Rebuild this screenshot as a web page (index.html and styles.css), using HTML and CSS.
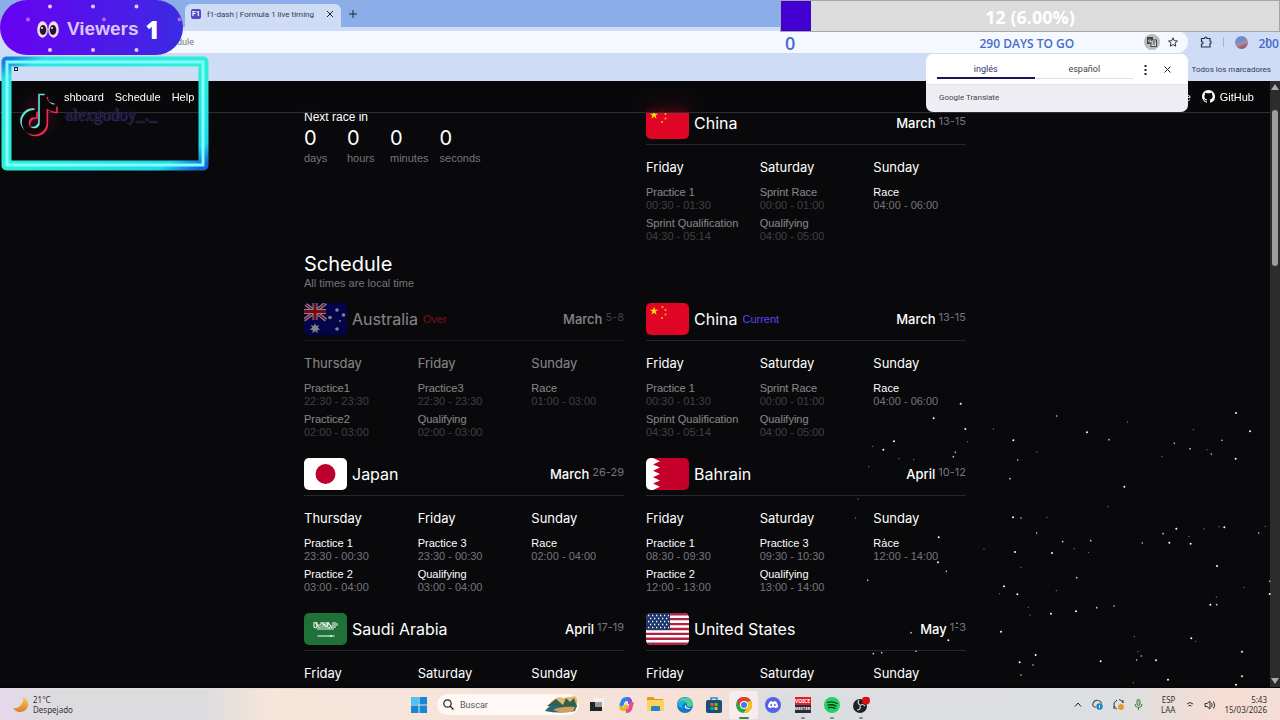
FILE: index.html
```html
<!DOCTYPE html>
<html lang="en">
<head>
    <meta charset="UTF-8">
    <meta name="viewport" content="width=device-width, initial-scale=1.0">
    <title>f1-dash | Formula 1 live timing</title>
    <link rel="stylesheet" href="styles.css">
</head>
<body>
    <!-- Shared flag -->
    <svg class="defs" aria-hidden="true">
        <symbol id="flag-china" viewBox="0 0 43 32">
            <rect width="43" height="32" fill="#e00425"/>
            <path fill="#ffde00" d="M8 3.600l1 3.100h3.200l-2.600 1.900 1 3.100-2.600-1.900-2.600 1.900 1-3.100-2.600-1.900H7z"/>
            <g fill="#ffb400"><circle cx="16.500" cy="4" r="1"/><circle cx="19.500" cy="7" r="1"/><circle cx="19.500" cy="11.500" r="1"/><circle cx="16" cy="15" r="1"/></g>
        </symbol>
    </svg>

    <!-- Browser -->
    <header class="browser">
        <div class="tab-strip">
            <div class="tab">
                <span class="favicon">F1</span>
                <span class="tab-title">f1-dash | Formula 1 live timing</span>
                <button class="icon-btn" aria-label="Close tab"><svg width="8" height="8" viewBox="0 0 8 8"><path d="M1 1l6 6M7 1l-6 6" stroke="#222"/></svg></button>
            </div>
            <button class="icon-btn new-tab" aria-label="New tab"><svg width="8" height="8" viewBox="0 0 8 8"><path d="M4 0v8M0 4h8" stroke="#1c2740"/></svg></button>
        </div>
        <div class="toolbar">
            <div class="omnibox">
                <input type="text" value="dule" aria-label="Address">
                <button class="icon-btn translate-btn" aria-label="Translate">
                    <svg width="10" height="10" viewBox="0 0 10 10"><rect x="0" y="0" width="6" height="7" fill="#444"/><rect x="4" y="3" width="5.500" height="6.500" fill="#ddd" stroke="#444"/><path d="M5.500 5h3M7 4v1c0 2-1 2-1.500 3M6 6l2 2" stroke="#444" stroke-width=".7" fill="none"/><path d="M4 3H1.800v2H4V4H3" stroke="#ddd" stroke-width=".8" fill="none"/></svg>
                </button>
                <button class="icon-btn" aria-label="Bookmark"><svg width="10" height="10" viewBox="0 0 20 20"><path d="M10 1.500l2.500 6 6.500.5-5 4.200 1.600 6.300L10 15.100l-5.600 3.400L6 12.200 1 8l6.500-.5z" fill="none" stroke="#333" stroke-width="2"/></svg></button>
            </div>
            <button class="icon-btn" aria-label="Extensions"><svg width="12" height="12" viewBox="0 0 12 12"><path d="M1.500 2.500h3c0-2 2.500-2 2.500 0h3V5c1.500 0 1.500 2.500 0 2.500V11h-8.500V8c2 0 2-2.500 0-2.500z" fill="none" stroke="#26334d" stroke-width="1.200"/></svg></button>
            <span class="separator"></span>
            <button class="icon-btn avatar" aria-label="Profile"></button>
            <button class="icon-btn menu" aria-label="Menu"><svg width="2" height="8" viewBox="0 0 2 8"><path d="M0 0h1.500v1.500H0zM0 3h1.500v1.500H0zM0 6h1.500v1.500H0z" fill="#26334d"/></svg></button>
        </div>
        <div class="bookmarks">
            <a href="#">Todos los marcadores</a>
        </div>
    </header>

    <!-- Site -->
    <div class="viewport">
        <nav class="navbar">
            <div class="nav-links">
                <a href="#">shboard</a>
                <a href="#">Schedule</a>
                <a href="#">Help</a>
            </div>
            <div class="nav-links nav-right">
                <a href="#">e</a>
                <a href="#" class="github">
                    <svg width="13" height="13" viewBox="0 0 16 16"><path fill="#fff" d="M8 0C3.580 0 0 3.580 0 8c0 3.540 2.290 6.530 5.470 7.590.4.070.55-.17.55-.38 0-.19-.01-.82-.01-1.490-2.010.37-2.530-.49-2.690-.94-.09-.23-.48-.94-.82-1.130-.28-.15-.68-.52-.01-.53.63-.01 1.080.58 1.230.82.72 1.210 1.870.87 2.330.66.07-.52.28-.87.51-1.070-1.780-.2-3.640-.89-3.640-3.950 0-.87.31-1.590.82-2.150-.08-.2-.36-1.020.08-2.120 0 0 .67-.21 2.200.82.64-.18 1.320-.27 2-.27s1.360.09 2 .27c1.530-1.040 2.200-.82 2.200-.82.44 1.100.16 1.920.08 2.120.51.56.82 1.270.82 2.150 0 3.070-1.870 3.750-3.650 3.950.29.25.54.73.54 1.480 0 1.070-.01 1.930-.01 2.200 0 .21.15.46.55.38A8.013 8.013 0 0016 8c0-4.420-3.580-8-8-8z"/></svg>
                    GitHub
                </a>
            </div>
        </nav>

        <main class="content">
            <div class="race-grid">
                <section class="countdown">
                    <p>Next race in</p>
                    <div class="counters">
                        <div class="counter"><strong>0</strong><span>days</span></div>
                        <div class="counter"><strong>0</strong><span>hours</span></div>
                        <div class="counter"><strong>0</strong><span>minutes</span></div>
                        <div class="counter"><strong>0</strong><span>seconds</span></div>
                    </div>
                </section>

                <article class="race">
                    <header class="race-header">
                        <svg class="flag"><use href="#flag-china"/></svg>
                        <h2>China</h2>
                        <p class="date">March <span>13-15</span></p>
                    </header>
                    <div class="days">
                        <div class="day">
                            <h3>Friday</h3>
                            <div class="session past"><p>Practice 1</p><p class="time">00:30 - 01:30</p></div>
                            <div class="session past"><p>Sprint Qualification</p><p class="time">04:30 - 05:14</p></div>
                        </div>
                        <div class="day">
                            <h3>Saturday</h3>
                            <div class="session past"><p>Sprint Race</p><p class="time">00:00 - 01:00</p></div>
                            <div class="session past"><p>Qualifying</p><p class="time">04:00 - 05:00</p></div>
                        </div>
                        <div class="day">
                            <h3>Sunday</h3>
                            <div class="session"><p>Race</p><p class="time">04:00 - 06:00</p></div>
                        </div>
                    </div>
                </article>
            </div>

            <div class="section-title">
                <h1>Schedule</h1>
                <p>All times are local time</p>
            </div>

            <div class="race-grid">
                <!-- Australia -->
                <article class="race over">
                    <header class="race-header">
                        <svg class="flag" viewBox="0 0 43 32">
                            <rect width="43" height="32" fill="#00008b"/>
                            <path d="M0 0l22 17M22 0L0 17" stroke="#fff" stroke-width="3.500"/>
                            <path d="M0 0l22 17M22 0L0 17" stroke="#f00020" stroke-width="1.200"/>
                            <path d="M11 0v17M0 8.500h22" stroke="#fff" stroke-width="5"/>
                            <path d="M11 0v17M0 8.500h22" stroke="#f00020" stroke-width="3"/>
                            <path fill="#fff" d="M11 20l1.200 3 3-1-1.500 2.800 2.800 1.600-3.200.5.200 3.300L11 27.900l-2.500 2.300.2-3.300-3.200-.5 2.800-1.600L6.800 22l3 1z"/>
                            <g fill="#fff"><circle cx="33" cy="7" r="1.800"/><circle cx="26" cy="14.500" r="1.800"/><circle cx="39.500" cy="12" r="1.800"/><circle cx="33" cy="26" r="1.800"/><circle cx="36" cy="18" r="1"/></g>
                        </svg>
                        <h2>Australia</h2>
                        <span class="status">Over</span>
                        <p class="date">March <span>5-8</span></p>
                    </header>
                    <div class="days">
                        <div class="day">
                            <h3>Thursday</h3>
                            <div class="session"><p>Practice1</p><p class="time">22:30 - 23:30</p></div>
                            <div class="session"><p>Practice2</p><p class="time">02:00 - 03:00</p></div>
                        </div>
                        <div class="day">
                            <h3>Friday</h3>
                            <div class="session"><p>Practice3</p><p class="time">22:30 - 23:30</p></div>
                            <div class="session"><p>Qualifying</p><p class="time">02:00 - 03:00</p></div>
                        </div>
                        <div class="day">
                            <h3>Sunday</h3>
                            <div class="session"><p>Race</p><p class="time">01:00 - 03:00</p></div>
                        </div>
                    </div>
                </article>

                <!-- China -->
                <article class="race">
                    <header class="race-header">
                        <svg class="flag"><use href="#flag-china"/></svg>
                        <h2>China</h2>
                        <span class="status current">Current</span>
                        <p class="date">March <span>13-15</span></p>
                    </header>
                    <div class="days">
                        <div class="day">
                            <h3>Friday</h3>
                            <div class="session past"><p>Practice 1</p><p class="time">00:30 - 01:30</p></div>
                            <div class="session past"><p>Sprint Qualification</p><p class="time">04:30 - 05:14</p></div>
                        </div>
                        <div class="day">
                            <h3>Saturday</h3>
                            <div class="session past"><p>Sprint Race</p><p class="time">00:00 - 01:00</p></div>
                            <div class="session past"><p>Qualifying</p><p class="time">04:00 - 05:00</p></div>
                        </div>
                        <div class="day">
                            <h3>Sunday</h3>
                            <div class="session"><p>Race</p><p class="time">04:00 - 06:00</p></div>
                        </div>
                    </div>
                </article>

                <!-- Japan -->
                <article class="race">
                    <header class="race-header">
                        <svg class="flag" viewBox="0 0 43 32"><rect width="43" height="32" fill="#fff"/><circle cx="21.500" cy="16" r="10" fill="#bc002d"/></svg>
                        <h2>Japan</h2>
                        <p class="date">March <span>26-29</span></p>
                    </header>
                    <div class="days">
                        <div class="day">
                            <h3>Thursday</h3>
                            <div class="session"><p>Practice 1</p><p class="time">23:30 - 00:30</p></div>
                            <div class="session"><p>Practice 2</p><p class="time">03:00 - 04:00</p></div>
                        </div>
                        <div class="day">
                            <h3>Friday</h3>
                            <div class="session"><p>Practice 3</p><p class="time">23:30 - 00:30</p></div>
                            <div class="session"><p>Qualifying</p><p class="time">03:00 - 04:00</p></div>
                        </div>
                        <div class="day">
                            <h3>Sunday</h3>
                            <div class="session"><p>Race</p><p class="time">02:00 - 04:00</p></div>
                        </div>
                    </div>
                </article>

                <!-- Bahrain -->
                <article class="race">
                    <header class="race-header">
                        <svg class="flag" viewBox="0 0 43 32"><rect width="43" height="32" fill="#c4002b"/><path fill="#fff" d="M0 0h7l7 3.200-7 3.200 7 3.200-7 3.200L14 16l-7 3.200 7 3.200-7 3.200 7 3.200L7 32H0z"/></svg>
                        <h2>Bahrain</h2>
                        <p class="date">April <span>10-12</span></p>
                    </header>
                    <div class="days">
                        <div class="day">
                            <h3>Friday</h3>
                            <div class="session"><p>Practice 1</p><p class="time">08:30 - 09:30</p></div>
                            <div class="session"><p>Practice 2</p><p class="time">12:00 - 13:00</p></div>
                        </div>
                        <div class="day">
                            <h3>Saturday</h3>
                            <div class="session"><p>Practice 3</p><p class="time">09:30 - 10:30</p></div>
                            <div class="session"><p>Qualifying</p><p class="time">13:00 - 14:00</p></div>
                        </div>
                        <div class="day">
                            <h3>Sunday</h3>
                            <div class="session"><p>Race</p><p class="time">12:00 - 14:00</p></div>
                        </div>
                    </div>
                </article>

                <!-- Saudi Arabia -->
                <article class="race">
                    <header class="race-header">
                        <svg class="flag" viewBox="0 0 43 32">
                            <rect width="43" height="32" fill="#20703a"/>
                            <path d="M10 9v5q2 2 3-1V9m2 5h4V9m-2 0v3m4-3v6m-9-3h5m6-3v5q3 2 4-2m-3-3v4m5-4v6m2-6v6m2-5v3m-22-4l4 6m3-5l5 4m1-5l4 6m-15 1h17" stroke="#e6f2e8" stroke-width="1.100" fill="none"/>
                            <path d="M13.500 23h17M27 22v2" stroke="#fff" stroke-width="1.200"/>
                        </svg>
                        <h2>Saudi Arabia</h2>
                        <p class="date">April <span>17-19</span></p>
                    </header>
                    <div class="days">
                        <div class="day"><h3>Friday</h3></div>
                        <div class="day"><h3>Saturday</h3></div>
                        <div class="day"><h3>Sunday</h3></div>
                    </div>
                </article>

                <!-- United States -->
                <article class="race">
                    <header class="race-header">
                        <svg class="flag" viewBox="0 0 43 32">
                            <rect width="43" height="32" fill="#fff"/>
                            <path d="M0 1.200h43M0 6.100h43M0 11.100h43M0 16h43M0 20.900h43M0 25.800h43M0 30.800h43" stroke="#b22243" stroke-width="2.400"/>
                            <rect width="24" height="17" fill="#1f3468"/>
                            <path d="M2 2.500h21M4 5.500h19M2 8.500h21M4 11.500h19M2 14.500h21" stroke="#fff" stroke-width="1.300" stroke-dasharray="1.300 2.700"/>
                        </svg>
                        <h2>United States</h2>
                        <p class="date">May <span>1-3</span></p>
                    </header>
                    <div class="days">
                        <div class="day"><h3>Friday</h3></div>
                        <div class="day"><h3>Saturday</h3></div>
                        <div class="day"><h3>Sunday</h3></div>
                    </div>
                </article>
            </div>
        </main>

        <div class="scrollbar">
            <svg width="10" height="6" viewBox="0 0 10 6"><path d="M5 0l4 6H1z" fill="#aaa"/></svg>
            <span class="thumb"></span>
            <svg class="arrow-down" width="10" height="6" viewBox="0 0 10 6"><path d="M5 6l4-6H1z" fill="#aaa"/></svg>
        </div>

        <!-- Star particles -->
        <svg class="stars" viewBox="0 0 1320 930" aria-hidden="true">
            <path class="bright" d="M130 209h0M520 181h0M1188 99h0M1230 154h0M1187 236h0M362 71h0M376 147h0M281 115h0M162 184h0M741 157h0M853 320h0M519 412h0M525 516h0M636 519h0M988 488h0M1052 491h0M1153 442h0M1009 446h0M296 472h0M294 547h0M532 643h0M492 619h0M633 701h0M708 694h0M483 755h0M325 781h0M587 825h0M539 847h0M1054 775h0M1206 815h0M984 899h0M1206 889h0M948 841h0M782 844h0M1131 558h0M1111 674h0M1289 642h0M1188 914h0"/>
            <path class="medium" d="M340 230h0M346 217h0M807 179h0M1003 190h0M1146 181h0M1050 206h0M533 240h0M510 296h0M543 414h0M590 459h0M668 485h0M752 482h0M969 461h0M907 489h0M1256 459h0M319 574h0M83 601h0M710 593h0M822 678h0M770 683h0M1130 674h0M543 885h0M904 828h0M890 840h0M125 818h0M100 821h0M228 814h0M213 758h0M650 108h0M133 478h0M1289 604h0M1114 222h0M351 730h0M579 855h0"/>
            <path class="dim" d="M98 199h0M86 260h0M221 239h0M177 236h0M383 185h0M460 147h0M591 216h0M862 126h0M1060 149h0M966 230h0M1101 209h0M804 380h0M621 412h0M54 357h0M46 414h0M432 507h0M543 562h0M703 506h0M746 517h0M1047 470h0M1092 447h0M1137 440h0M1276 439h0M479 641h0M649 632h0M570 705h0M565 682h0M1129 651h0M1212 622h0M883 770h0M1067 784h0M894 815h0M880 908h0"/>
        </svg>
    </div>

    <!-- Taskbar -->
    <footer class="taskbar">
        <div class="weather">
            <svg width="16" height="16" viewBox="0 0 16 16"><defs><linearGradient id="moon" x2="0" y2="1"><stop stop-color="#f8cf52"/><stop offset="1" stop-color="#e07a2a"/></linearGradient></defs><path fill="url(#moon)" d="M10 0c8 4 6 15-3 15-3 0-5.500-1.500-7-4 6 1 11-4 10-11z"/></svg>
            <p>21°C<br>Despejado</p>
        </div>
        <div class="task-center">
            <button class="icon-btn start" aria-label="Start"><svg width="16" height="16" viewBox="0 0 16 16"><path fill="#1687d9" d="M0 0h7.500v7.500H0zM8.500 0H16v7.500H8.500zM0 8.500h7.500V16H0zM8.500 8.500H16V16H8.500z"/><path fill="#4cc4f3" d="M0 0h7.500v7.500H0z"/></svg></button>
            <div class="search">
                <svg width="11" height="11" viewBox="0 0 11 11"><circle cx="4.500" cy="4.500" r="3.700" fill="none" stroke="#222" stroke-width="1.200"/><path d="M7.200 7.200L10.500 10.500" stroke="#222" stroke-width="1.300"/></svg>
                <input type="search" placeholder="Buscar" aria-label="Buscar">
                <svg width="33" height="17" viewBox="0 0 33 17"><path d="M4 9C8 2 15 0 18 2l13-2c2 5 2 10-1 13z" fill="#e0b96b"/><path d="M2 10l9-7 7 6 3-7 4 4 4-4 3 9-10 3z" fill="#345f4d"/><path d="M0 15q5-7 14-5t18-1l-2 6q-15 3-30 0z" fill="#286779"/><path d="M8 14q8-4 22-3l-2 5H14z" fill="#d2a153"/></svg>
            </div>
            <div class="apps">
                <button class="icon-btn" aria-label="Task view"><svg width="14" height="14" viewBox="0 0 14 14"><path fill="#f4f2ee" d="M4 0h10v9H4z"/><path fill="#222" d="M0 4h5v5h7v4H0z"/><path fill="#999" d="M5 4h7v5H5z"/></svg></button>
                <button class="icon-btn" aria-label="Copilot"><svg width="16" height="16" viewBox="0 0 16 16" fill="none" stroke-width="4"><path d="M3 9l2-5q1-2 4-2" stroke="#2289e8"/><path d="M3 9q0 4 4 3l2-4" stroke="#e6b62c"/><path d="M9 2q3 0 3 3h2" stroke="#7656de"/><path d="M14 5l-2 7q-1 2-4 2" stroke="#e74b8f"/></svg></button>
                <button class="icon-btn" aria-label="Explorer"><svg width="17" height="15" viewBox="0 0 17 15"><path fill="#d99a21" d="M0 1q0-1 1-1h5l2 2h8v5H0z"/><rect y="3" width="17" height="11" rx="1" fill="#fbd35b"/><path fill="#2484cb" d="M4 14v-4q0-1 1-1h7q1 0 1 1v4z"/></svg></button>
                <button class="icon-btn" aria-label="Edge"><svg width="16" height="16" viewBox="0 0 16 16"><circle cx="8" cy="8" r="8" fill="#1478ca"/><path fill="#48cf9d" d="M1 6C3-2 16-1 16 7c0 3-4 4-6 2 1-4-5-6-9-3z"/><path fill="#1bb0dc" d="M0 8c1-5 8-5 9-2-3 0-5 3-3 6z"/><path fill="#eaf5fa" d="M9 8q0 4 6 3-4 2-7 0-1-2 1-3z"/></svg></button>
                <button class="icon-btn" aria-label="Store"><svg width="16" height="16" viewBox="0 0 16 16"><path d="M5 4V1h6v3" fill="none" stroke="#2889c9" stroke-width="1.500"/><rect y="3" width="16" height="13" rx="2" fill="#194e77"/><path fill="#f25022" d="M4.500 6h3v3h-3z"/><path fill="#7fba00" d="M8.500 6h3v3h-3z"/><path fill="#00a4ef" d="M4.500 10h3v3h-3z"/><path fill="#ffb900" d="M8.500 10h3v3h-3z"/></svg></button>
                <button class="icon-btn active" aria-label="Chrome"><svg width="16" height="16" viewBox="0 0 16 16"><circle cx="8" cy="8" r="8" fill="#2ea44f"/><path fill="#e33b2e" d="M1.100 4A8 8 0 0115 4.200H8L4.600 10z"/><path fill="#fbc116" d="M15 4.200A8 8 0 017.500 16L11.500 10V4.200z"/><circle cx="8" cy="8" r="4" fill="#fff"/><circle cx="8" cy="8" r="3" fill="#3b7de9"/></svg></button>
                <button class="icon-btn" aria-label="Discord"><svg width="16" height="16" viewBox="0 0 16 16"><circle cx="8" cy="8" r="8" fill="#5661e8"/><path fill="#fff" d="M4.500 5q1-.8 2.300-1l.4.7h1.600l.4-.7q1.300.2 2.300 1 1.600 2.500 1.500 5-1.200 1-2.500 1.300l-.7-1q-1.800.4-3.600 0l-.7 1Q4.200 11 3 10q-.1-2.500 1.500-5z"/><g fill="#5661e8"><circle cx="6.200" cy="8" r="1"/><circle cx="9.800" cy="8" r="1"/></g></svg></button>
                <button class="icon-btn running voicemeeter" aria-label="Voicemeeter"><span>VOICE</span><span>MEETER</span></button>
                <button class="icon-btn running" aria-label="Spotify"><svg width="16" height="16" viewBox="0 0 16 16"><circle cx="8" cy="8" r="8" fill="#1fd45f"/><path d="M3.500 5.500q5-1.500 9.500 1M4 8.200q4-1.200 8 .8M4.500 10.700q3.500-1 6.500.7" fill="none" stroke="#12311d" stroke-width="1.300" stroke-linecap="round"/></svg></button>
                <button class="icon-btn running obs" aria-label="OBS"><svg width="18" height="16" viewBox="0 0 18 16"><circle cx="8" cy="9" r="7" fill="#202124"/><g fill="none" stroke="#ddd" stroke-width="1.200"><path d="M7 3q-2 3 1 5M13 9q-3-3-5 0M5 13q4 0 3-4"/></g><circle cx="14" cy="3.500" r="4" fill="#e50914"/></svg></button>
            </div>
        </div>
        <div class="tray">
            <svg width="8" height="5" viewBox="0 0 8 5"><path d="M1 4.500l3-3.500 3 3.500" fill="none" stroke="#222"/></svg>
            <svg width="11" height="11" viewBox="0 0 11 11"><path d="M4 8H2.500Q0 7 1 4.500 2 1 5.500 1.500q3.500 0 4 3" fill="none" stroke="#555" stroke-width="1.200"/><circle cx="7.500" cy="7.500" r="3.200" fill="#1d83c9"/><path d="M7.500 6v3" stroke="#fff"/></svg>
            <svg width="11" height="11" viewBox="0 0 11 11"><path d="M1 7Q0 3 4 1m2-.5Q9 1 10 4V1M4 10Q2 9.500 1 7v3" fill="none" stroke="#333"/><circle cx="8" cy="8" r="3" fill="#e39b34"/></svg>
            <svg width="9" height="11" viewBox="0 0 9 11"><rect x="3" y=".5" width="3" height="6" rx="1.500" fill="#a8cda8" stroke="#397d43"/><path d="M1 5q0 3.500 3.500 3.500T8 5M4.500 8.500V11" fill="none" stroke="#397d43"/></svg>
            <p class="lang">ESP<br>LAA</p>
            <svg width="8" height="7" viewBox="0 0 8 7"><path d="M1 3q3-3 6 0M2.500 5q1.500-1.500 3 0" fill="none" stroke="#333"/></svg>
            <svg width="12" height="10" viewBox="0 0 12 10"><path d="M1 3.500h2L6 1v8L3 6.500H1zM7.500 3q1.500 2 0 4M9.500 1.500q2.500 3.500 0 7" fill="none" stroke="#333"/></svg>
            <p class="clock">5:43<br>15/03/2026</p>
        </div>
    </footer>

    <!-- Translate popup -->
    <div class="translate">
        <div class="translate-tabs">
            <button class="lang-tab selected">inglés</button>
            <button class="lang-tab">español</button>
            <button class="icon-btn" aria-label="Options"><svg width="3" height="10" viewBox="0 0 3 10"><path d="M.5 0h2v2h-2zM.5 4h2v2h-2zM.5 8h2v2h-2z" fill="#222"/></svg></button>
            <button class="icon-btn" aria-label="Close"><svg width="7" height="7" viewBox="0 0 7 7"><path d="M.5.5l6 6M6.500.5l-6 6" stroke="#222"/></svg></button>
        </div>
        <p>Google Translate</p>
    </div>

    <!-- Stream overlays -->
    <div class="goal">
        <div class="goal-bar">
            <div class="goal-fill" style="width: 6%"></div>
            <span>12 (6.00%)</span>
        </div>
        <div class="goal-labels">
            <span class="goal-start">0</span>
            <span>290 DAYS TO GO</span>
            <span class="goal-end">200</span>
        </div>
    </div>

    <div class="viewers">
        <svg class="dots" viewBox="0 0 183 55" aria-hidden="true"><path d="M50 6.500h0M93 6.500h0M136.500 6.500h0M50 50h0M93 50h0M136.500 50h0" stroke="#e5c8ff" stroke-width="4" stroke-linecap="round"/><path d="M28 19.500h0M104 19.500h0M179.500 19.500h0" stroke="#b465f5" stroke-width="4" stroke-linecap="round"/></svg>
        <svg width="22" height="17" viewBox="0 0 22 17"><ellipse cx="5.500" cy="8.500" rx="5.300" ry="8.300" fill="#f1dde6"/><ellipse cx="16.500" cy="8.500" rx="5.300" ry="8.300" fill="#f1dde6"/><ellipse cx="6" cy="9" rx="3.300" ry="5" fill="#241438"/><ellipse cx="16" cy="9" rx="3.300" ry="5" fill="#241438"/><circle cx="5" cy="7" r="1" fill="#fff"/><circle cx="15" cy="7" r="1" fill="#fff"/></svg>
        <span>Viewers</span>
        <strong>1</strong>
    </div>

    <div class="cam-frame">
        <svg class="frame" viewBox="0 0 208 115" aria-hidden="true">
            <defs><linearGradient id="neon" x1="0" y1="0" x2="1" y2="1"><stop stop-color="#1580e0"/><stop offset=".08" stop-color="#2fe2e4"/><stop offset=".5" stop-color="#2cf0d4"/><stop offset=".9" stop-color="#20d8ea"/><stop offset="1" stop-color="#1464d8"/></linearGradient></defs>
            <rect x="5.500" y="5.500" width="197" height="104" fill="none" stroke="url(#neon)" stroke-width="10" stroke-linejoin="round"/>
            <rect x="6" y="6" width="196" height="103" fill="none" stroke="#7ffcff" stroke-width="3"/>
        </svg>
        <svg class="tiktok" viewBox="-2 -2 28 28">
            <defs><path id="note" d="M12.525.02c1.310-.02 2.610-.01 3.910-.02.08 1.530.63 3.090 1.750 4.170 1.120 1.110 2.700 1.620 4.240 1.790v4.030c-1.440-.05-2.890-.35-4.200-.97-.57-.26-1.100-.59-1.620-.93-.01 2.920.01 5.840-.02 8.750-.08 1.400-.54 2.790-1.350 3.940-1.310 1.920-3.580 3.170-5.910 3.210-1.430.08-2.860-.31-4.080-1.030-2.020-1.190-3.440-3.370-3.650-5.710-.02-.5-.03-1-.01-1.490.18-1.900 1.120-3.720 2.580-4.960 1.660-1.440 3.980-2.130 6.150-1.720.02 1.480-.04 2.960-.04 4.440-.99-.32-2.150-.23-3.020.37-.63.41-1.110 1.040-1.360 1.750-.21.51-.15 1.070-.14 1.610.24 1.640 1.820 3.020 3.500 2.870 1.120-.01 2.190-.66 2.770-1.610.19-.33.4-.67.41-1.060.1-1.790.06-3.570.07-5.360.01-4.030-.01-8.050.02-12.070z"/></defs>
            <use href="#note" x="-1" y="-1" fill="#62e5d2"/>
            <use href="#note" x="1" y="1" fill="#f5284f"/>
            <use href="#note" fill="#0b0508"/>
        </svg>
        <span class="handle">alexgodoy_._</span>
        <i class="cam-icon"></i>
    </div>
</body>
</html>
```
FILE: styles.css
```css
* {
    margin: 0;
    padding: 0;
    box-sizing: border-box;
}

:root {
    --bg: #09090b;
    --muted: #75757d;
    --line: #27272a;
    --chrome: #cfdcf6;
    --goal-blue: #456bcf;
    --heading: Inter, "Liberation Sans", sans-serif;
}

body {
    height: 100vh;
    display: flex;
    flex-direction: column;
    position: relative;
    overflow: hidden;
    background: var(--bg);
    color: #fff;
    font-family: "Liberation Sans", Arial, sans-serif;
    font-size: 11px;
}

a {
    color: inherit;
    text-decoration: none;
}

button, input {
    border: none;
    background: none;
    font: inherit;
    color: inherit;
}

h1, h2, h3 {
    font-family: var(--heading);
    font-weight: 400;
}

svg {
    flex: none;
}

.defs {
    position: absolute;
    width: 0;
    height: 0;
}

.icon-btn {
    display: flex;
    align-items: center;
    justify-content: center;
}

/* Browser */
.browser {
    background: var(--chrome);
    color: #333b4d;
    font-family: Roboto, sans-serif;
    font-size: 9px;
}

.tab-strip {
    display: flex;
    height: 27px;
    padding-left: 185px;
    background: #8baee8;
}

.tab {
    display: flex;
    align-items: center;
    width: 156px;
    height: 23px;
    margin-top: 4px;
    padding: 0 7px 3px 6px;
    background: var(--chrome);
    border-radius: 6px 6px 0 0;
}

.favicon {
    width: 10px;
    height: 10px;
    margin-right: 6px;
    background: #5546c8;
    border-radius: 2px;
    color: #fff;
    font-size: 7px;
    font-weight: 700;
    line-height: 10px;
    text-align: center;
}

.tab-title {
    flex: 1;
    white-space: nowrap;
    font-size: 8px;
}

.new-tab {
    margin-left: 8px;
}

.toolbar {
    display: flex;
    align-items: center;
    height: 30px;
    padding: 0 8px;
}

.omnibox {
    flex: 1;
    display: flex;
    align-items: center;
    gap: 8px;
    height: 22px;
    margin-right: 12px;
    padding: 0 10px 0 169px;
    background: #f5f9ff;
    border-radius: 11px;
}

.omnibox input {
    flex: 1;
    color: #777;
}

.translate-btn {
    width: 16px;
    height: 16px;
    background: #b9bcbf;
    border-radius: 50%;
}

.separator {
    width: 1px;
    height: 10px;
    margin: 0 11px;
    background: #9fb8e0;
}

.avatar {
    width: 13px;
    height: 13px;
    border-radius: 50%;
    background: linear-gradient(160deg, #6e8fc6 40%, #b48a9c 55%, #6c4060);
}

.menu {
    width: 10px;
    margin-left: 14px;
}

.bookmarks {
    display: flex;
    justify-content: flex-end;
    height: 24px;
    padding: 6px 9px 4px;
    line-height: 14px;
    font-size: 8px;
}

/* Site */
.viewport {
    flex: 1;
    min-height: 0;
    position: relative;
    overflow: hidden;
    padding-right: 10px;
    border-bottom: 1px solid #050506;
}

.navbar {
    position: absolute;
    top: 0;
    left: 0;
    right: 10px;
    z-index: 1;
    display: flex;
    justify-content: space-between;
    align-items: center;
    height: 32px;
    padding: 0 16px 0 64px;
    background: rgba(9, 9, 11, 0.7);
    backdrop-filter: blur(8px);
    border-bottom: 1px solid #2d2f30;
}

.nav-links {
    display: flex;
    align-items: center;
    gap: 11px;
}

.github {
    display: flex;
    align-items: center;
    gap: 5px;
}

.content {
    max-width: 662px;
    margin: 0 auto;
    padding-top: 26px;
}

.race-grid {
    display: grid;
    grid-template-columns: repeat(2, minmax(0, 1fr));
    gap: 19px 22px;
}

.countdown {
    padding-top: 2px;
    font-size: 12px;
    line-height: 16px;
}

.counters {
    display: flex;
    gap: 11px;
}

.counter {
    min-width: 32px;
}

.counter strong {
    display: block;
    font-family: var(--heading);
    font-size: 20px;
    font-weight: 400;
    line-height: 26px;
}

.counter span {
    display: block;
    color: var(--muted);
    font-size: 11px;
    line-height: 14px;
}

.section-title {
    margin: 9px 0 12px;
}

.section-title h1 {
    font-size: 20px;
    line-height: 24px;
}

.section-title p {
    color: var(--muted);
    line-height: 15px;
}

.race.over {
    opacity: 0.5;
}

.race-header {
    display: flex;
    align-items: center;
    gap: 5px;
    padding-bottom: 5px;
    border-bottom: 1px solid var(--line);
}

.flag {
    width: 43px;
    height: 32px;
    border-radius: 5px;
}

.race-header h2 {
    font-size: 16px;
}

.status {
    color: #e0182d;
}

.status.current {
    color: #5a45f0;
}

.date {
    display: flex;
    gap: 3px;
    margin-left: auto;
    font-family: var(--heading);
    font-size: 13px;
    font-weight: 500;
    line-height: 18px;
}

.date span {
    color: var(--muted);
    font-size: 11px;
    font-weight: 400;
    line-height: 14px;
}

.days {
    display: grid;
    grid-template-columns: repeat(3, minmax(0, 1fr));
    gap: 21px;
    padding-top: 12px;
}

.day h3 {
    margin-bottom: 8px;
    font-size: 13px;
    line-height: 20px;
}

.session {
    margin-bottom: 4px;
    line-height: 14px;
    white-space: nowrap;
}

.session:last-child {
    margin-bottom: 0;
}

.session .time {
    color: var(--muted);
    line-height: 13px;
}

.session.past {
    opacity: 0.5;
}

.scrollbar {
    position: absolute;
    top: 0;
    right: 0;
    bottom: 0;
    display: flex;
    flex-direction: column;
    align-items: center;
    width: 10px;
    padding: 3px 0;
    background: #2c2c2c;
}

.thumb {
    width: 6px;
    height: 26%;
    margin-top: 20px;
    background: #9d9d9d;
    border-radius: 3px;
}

.arrow-down {
    margin-top: auto;
}

.stars {
    position: absolute;
    right: 0;
    bottom: -3px;
    width: 440px;
    height: 310px;
    fill: none;
    stroke-linecap: round;
}

.stars .bright {
    stroke: #fff;
    stroke-width: 6;
}

.stars .medium {
    stroke: #ccc;
    stroke-width: 5;
}

.stars .dim {
    stroke: #777;
    stroke-width: 4;
}

/* Taskbar */
.taskbar {
    display: flex;
    justify-content: space-between;
    align-items: center;
    height: 32px;
    background: linear-gradient(90deg, #e5d8eb 0, #dcdcdf 4%, #dcdcdf 16%, #f7e5da 21%, #f6e0d8 56%, #dcdde0 60%, #dcdfe2 87%, #f5ddd4 95%);
    border-top: 1px solid #e6dfdc;
    color: #333;
    font-family: "Noto Sans", sans-serif;
    font-size: 8px;
    line-height: 10px;
}

.weather, .tray {
    flex: 1;
    display: flex;
    align-items: center;
}

.weather {
    gap: 4px;
    padding-left: 13px;
}

.task-center {
    display: flex;
    align-items: center;
    height: 100%;
}

.start {
    width: 29px;
    margin-right: 4px;
}

.search {
    display: flex;
    align-items: center;
    gap: 6px;
    width: 142px;
    height: 21px;
    padding: 0 1px 0 6px;
    background: #fff8f5;
    border-radius: 11px;
    overflow: hidden;
}

.search input {
    flex: 1;
    min-width: 0;
    font-family: Roboto, sans-serif;
    font-size: 9px;
}

.search input::placeholder {
    color: #555;
    opacity: 1;
}

.apps {
    display: flex;
    width: 294px;
    height: 28px;
    margin-left: 3px;
}

.apps .icon-btn {
    flex: 1;
    position: relative;
}

.apps .active {
    background: #f5eceb;
    border-radius: 3px;
}

.apps .active::after, .apps .running::after {
    content: "";
    position: absolute;
    bottom: 0;
    width: 4px;
    height: 2px;
    background: #888;
    border-radius: 1px;
}

.apps .active::after {
    width: 10px;
    background: #3d8a4d;
}

.apps .voicemeeter {
    flex-direction: column;
    color: #fff;
    font-size: 5px;
    font-weight: 700;
    line-height: 8px;
}

.voicemeeter span {
    width: 16px;
    overflow: hidden;
    background: #e2202b;
}

.voicemeeter span + span {
    background: #282c34;
    font-size: 4px;
}

.tray {
    justify-content: flex-end;
    gap: 10px;
    padding-right: 13px;
    text-align: right;
}

.tray .lang {
    margin: 0 1px 0 8px;
}

.tray .clock {
    margin-left: -2px;
}

/* Translate popup */
.translate {
    position: absolute;
    top: 54px;
    right: 92px;
    z-index: 2;
    width: 262px;
    background: #efedf4;
    border-radius: 7px;
    overflow: hidden;
    color: #444;
    font-family: Roboto, sans-serif;
    font-size: 9px;
}

.translate-tabs {
    display: flex;
    height: 31px;
    padding: 6px 10px 5px 11px;
    background: #fff;
    border-bottom: 1px solid #e2e0e8;
}

.translate-tabs .icon-btn {
    width: 22px;
}

.translate-tabs .lang-tab {
    flex: 1;
    margin-right: 1px;
    border-bottom: 1px solid #dedee6;
}

.translate-tabs .selected {
    border-bottom: 2px solid #1d1255;
    color: #2b3572;
}

.translate p {
    padding: 5px 13px 7px;
    font-size: 8px;
    line-height: 15px;
}

/* Stream overlays */
.goal {
    position: absolute;
    top: 0;
    right: 0;
    width: 500px;
    color: var(--goal-blue);
    font-family: "Open Sans", sans-serif;
    font-weight: 600;
}

.goal-bar {
    position: relative;
    display: flex;
    align-items: center;
    justify-content: center;
    height: 32px;
    padding-top: 2px;
    background: #dcdcdc;
    border: 1px solid #a5a5ac;
    color: #fff;
    font-size: 18px;
    font-weight: 700;
}

.goal-fill {
    position: absolute;
    top: 0;
    bottom: 0;
    left: 0;
    background: #4300d3;
}

.goal-labels {
    display: flex;
    align-items: center;
    justify-content: space-between;
    height: 22px;
    padding: 0 1px 0 5px;
    font-size: 12px;
}

.goal-start {
    font-size: 18px;
}

.viewers {
    position: absolute;
    top: 0;
    left: 0;
    display: flex;
    align-items: center;
    width: 183px;
    height: 55px;
    padding: 3px 0 0 37px;
    background: linear-gradient(90deg, #6800f2, #3b2be2);
    border-radius: 28px;
    color: #dcc4ff;
    font-family: "Liberation Sans", sans-serif;
    font-size: 19px;
    font-weight: 700;
}

.viewers span {
    margin: 0 7px 0 8px;
}

.viewers strong {
    color: #fff;
    font-family: "Open Sans", sans-serif;
    font-size: 24px;
}

.viewers .dots {
    position: absolute;
    inset: 0;
}

.cam-frame {
    position: absolute;
    top: 56px;
    left: 1px;
    z-index: 2;
    width: 208px;
    height: 115px;
}

.frame {
    position: absolute;
    inset: 0;
}

.tiktok {
    position: absolute;
    top: 33px;
    left: 15px;
    width: 46px;
    height: 52px;
    background: radial-gradient(rgba(90, 8, 40, 0.6), transparent 70%);
}

.handle {
    position: absolute;
    top: 48px;
    left: 64px;
    color: #131025;
    font-family: "Liberation Serif", serif;
    font-size: 17px;
    line-height: 22px;
    text-shadow: 0 0 1px #6b4a9c, 1px 1px 1px #26306b;
}

.cam-icon {
    position: absolute;
    top: 11px;
    left: 13px;
    width: 4px;
    height: 4px;
    border: 1px solid #223;
}
```
